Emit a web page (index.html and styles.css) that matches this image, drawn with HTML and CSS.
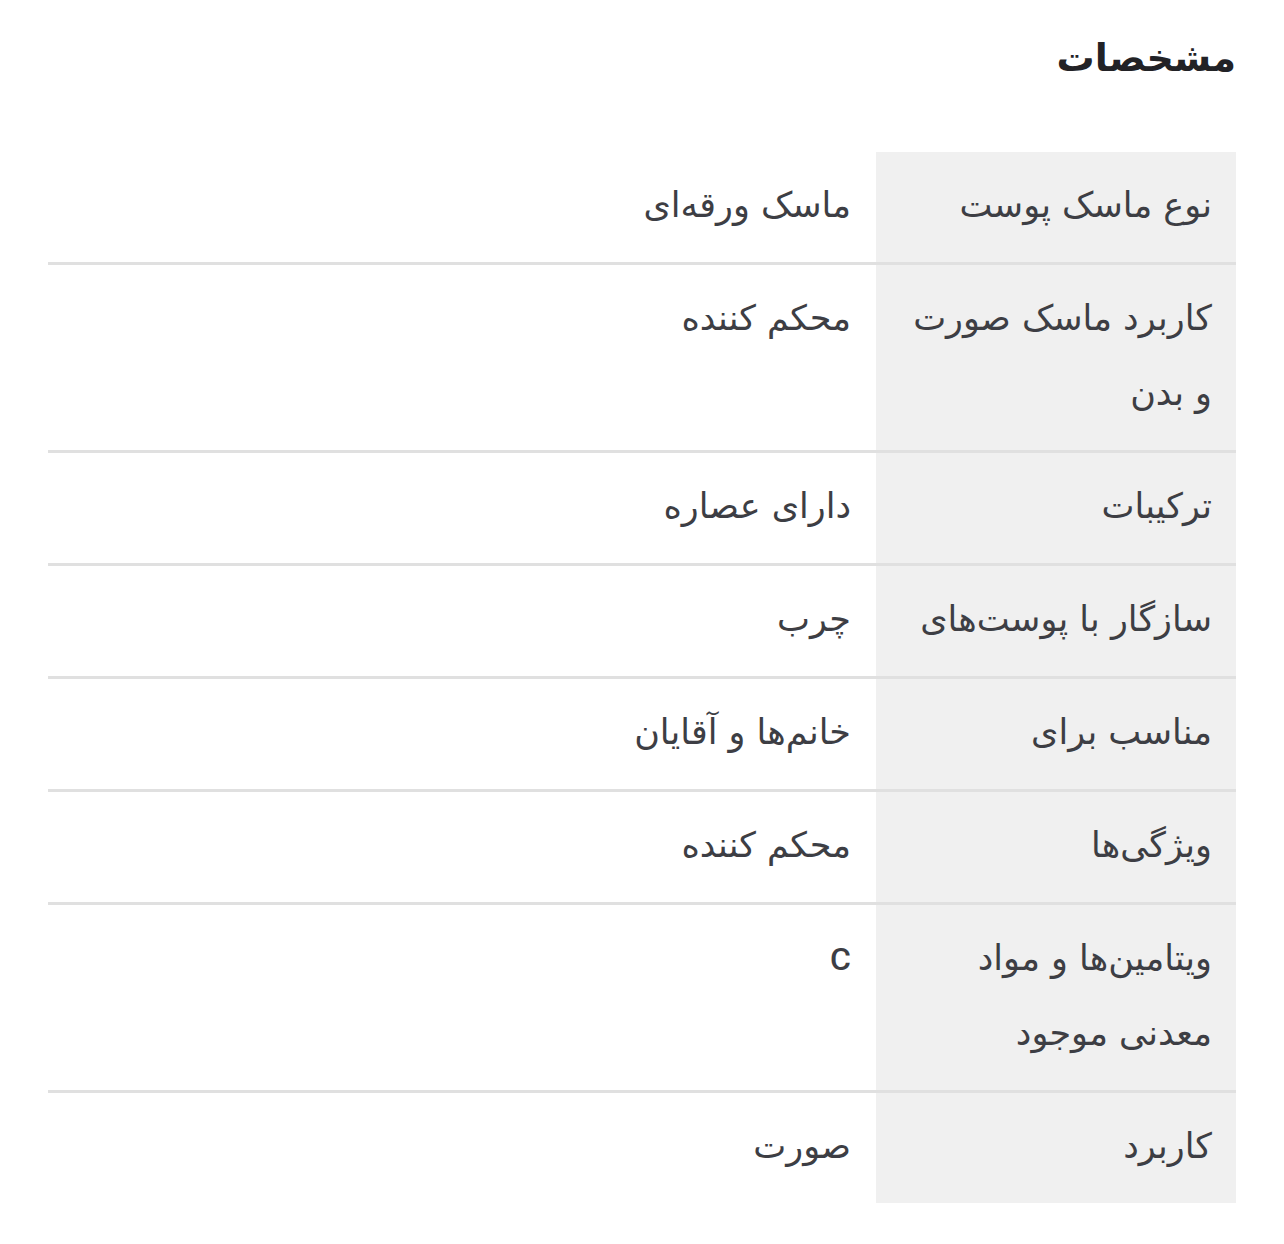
FILE: index.html
```html
<!DOCTYPE html>
<html lang="fa" dir="rtl">
<head>
<meta charset="utf-8">
<title>مشخصات</title>
<link rel="stylesheet" href="styles.css">
</head>
<body>
<section class="specs">
  <h2 class="specs-title">مشخصات</h2>
  <table class="specs-table">
    <tbody>
      <tr><th>نوع ماسک پوست</th><td>ماسک ورقه‌ای</td></tr>
      <tr><th>کاربرد ماسک صورت و بدن</th><td>محکم کننده</td></tr>
      <tr><th>ترکیبات</th><td>دارای عصاره</td></tr>
      <tr><th>سازگار با پوست‌های</th><td>چرب</td></tr>
      <tr><th>مناسب برای</th><td>خانم‌ها و آقایان</td></tr>
      <tr><th>ویژگی‌ها</th><td>محکم کننده</td></tr>
      <tr><th>ویتامین‌ها و مواد معدنی موجود</th><td><span class="latin">C</span></td></tr>
      <tr><th>کاربرد</th><td>صورت</td></tr>
    </tbody>
  </table>
</section>
</body>
</html>
```
FILE: styles.css
```css
html, body {
  margin: 0;
  padding: 0;
  background: #ffffff;
}
body {
  font-family: "DejaVu Sans", "Noto Sans", sans-serif;
  color: #3d3e44;
}
.specs {
  padding: 26px 48px 40px;
}
.specs-title {
  margin: 0 0 62px;
  font-size: 38px;
  font-weight: bold;
  color: #222226;
  line-height: 64px;
}
.specs-table {
  width: 100%;
  border-collapse: collapse;
  border-spacing: 0;
}
.specs-table tr {
  border-bottom: 3px solid #e0e0e0;
}
.specs-table tr:last-child {
  border-bottom: none;
}
.specs-table th,
.specs-table td {
  font-size: 35px;
  font-weight: normal;
  line-height: 75px;
  padding: 16px 24px 19px 24px;
  text-align: right;
  vertical-align: top;
}
.specs-table th {
  width: 312px;
  background: #f0f0f0;
}
.specs-table td {
  padding-right: 25px;
}
.latin {
  font-family: "Roboto", "Liberation Sans", sans-serif;
  font-weight: 500;
  font-size: 32px;
}
```
